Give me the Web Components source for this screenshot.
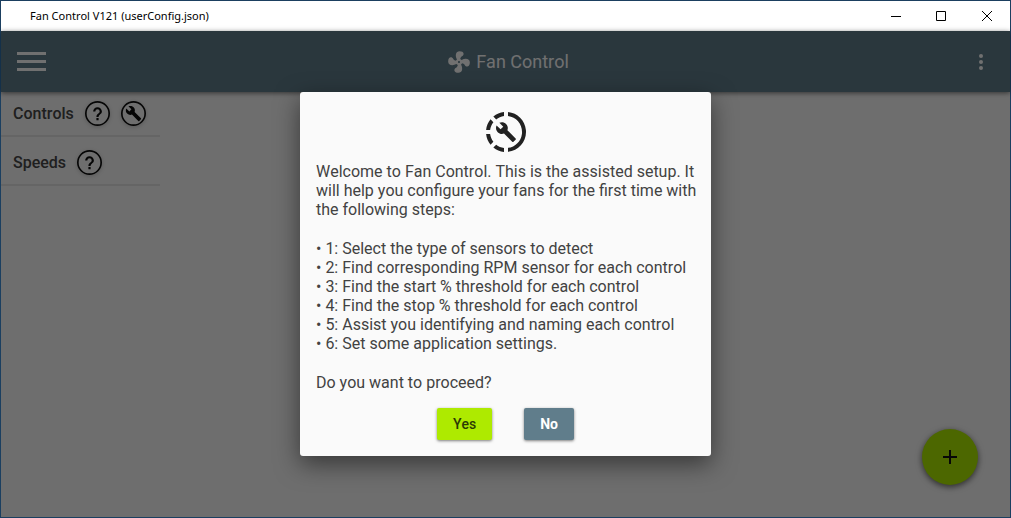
<!DOCTYPE html>
<html lang="en">
<head>
<meta charset="utf-8">
<title>Fan Control</title>
<style>
html, body { height: 100%; margin: 0; }
body { font-family: Roboto, "Liberation Sans", sans-serif; font-kerning: none; }
</style>
</head>
<body>
<fc-window>
  <fc-titlebar slot="title">Fan Control V121 (userConfig.json)</fc-titlebar>
  <fc-appbar slot="bar">Fan Control</fc-appbar>
  <fc-section>Controls
    <fc-round-button slot="actions" icon="help" label="Controls help"></fc-round-button>
    <fc-round-button slot="actions" icon="wrench" label="Assisted setup"></fc-round-button>
  </fc-section>
  <fc-section class="second">Speeds
    <fc-round-button slot="actions" icon="help" label="Speeds help"></fc-round-button>
  </fc-section>
  <fc-fab slot="fab"></fc-fab>
  <fc-dialog slot="dialog">
    <fc-button slot="actions" kind="accent">Yes</fc-button>
    <fc-button slot="actions" kind="primary">No</fc-button>
  </fc-dialog>
</fc-window>
<script>
function define(name, html) {
  const template = document.createElement('template');
  template.innerHTML = html;
  customElements.define(name, class extends HTMLElement {
    constructor() {
      super();
      this.attachShadow({ mode: 'open' }).appendChild(template.content.cloneNode(true));
    }
  });
}

define('fc-window', `
<style>
:host { display: flex; flex-direction: column; box-sizing: border-box; min-height: 100%; border: 1px solid #1b3f60; background: #fafafa; }
.client { flex: 1; position: relative; display: flex; flex-direction: column; }
main { flex: 1; }
.fab { position: absolute; right: 32px; bottom: 32px; }
.scrim { position: absolute; inset: 0; display: grid; place-items: center; background: rgba(0,0,0,.56); }
</style>
<slot name="title"></slot>
<div class="client">
  <slot name="bar"></slot>
  <main><slot></slot></main>
  <div class="fab"><slot name="fab"></slot></div>
  <div class="scrim"><slot name="dialog"></slot></div>
</div>`);

define('fc-titlebar', `
<style>
:host { display: flex; align-items: center; height: 30px; background: #fff; color: #000; font-family: "Noto Sans", sans-serif; font-size: 11px; line-height: 16px; }
.name { flex: 1; padding-left: 29px; }
button { width: 46px; height: 30px; padding: 0; border: 0; background: none; display: grid; place-items: center; }
svg { display: block; width: 12px; height: 12px; fill: none; stroke: #000; }
</style>
<span class="name"><slot></slot></span>
<button aria-label="Minimize"><svg viewBox="0 0 12 12"><path d="M2 6.5H12"/></svg></button>
<button aria-label="Maximize"><svg viewBox="0 0 12 12"><path d="M1.5 1.5h9v9h-9z"/></svg></button>
<button aria-label="Close"><svg viewBox="0 0 12 12"><path d="M1 1L11 11M11 1L1 11"/></svg></button>`);

define('fc-appbar', `
<style>
:host { display: grid; grid-template-columns: 1fr auto 1fr; align-items: center; height: 61px; background: #607d8b; color: #fff; position: relative; box-shadow: 0 1px 5px rgba(0,0,0,.55); }
h1 { margin: 0; padding-left: 4px; display: flex; align-items: center; gap: 4px; font-size: 18px; line-height: 24px; font-weight: 400; }
button { padding: 0; border: 0; background: none; color: inherit; }
.menu { justify-self: start; margin-left: 16px; }
.more { justify-self: end; margin-right: 23px; }
svg { display: block; fill: currentColor; }
</style>
<button class="menu" aria-label="Menu"><svg width="29" height="19" viewBox="0 0 29 19"><path d="M0 0h29v3H0zM0 8h29v3H0zM0 16h29v3H0z"/></svg></button>
<h1><svg width="26" height="26" viewBox="0 0 24 24"><path d="M12,11A1,1 0 0,0 11,12A1,1 0 0,0 12,13A1,1 0 0,0 13,12A1,1 0 0,0 12,11M12.5,2C17,2 17.11,5.57 14.75,6.75C13.76,7.24 13.32,8.29 13.13,9.22C13.61,9.42 14.03,9.73 14.35,10.13C18.05,8.13 22.03,8.92 22.03,12.5C22.03,17 18.46,17.1 17.28,14.73C16.78,13.74 15.72,13.3 14.79,13.11C14.59,13.59 14.28,14 13.88,14.34C15.87,18.03 15.08,22 11.5,22C7,22 6.91,18.42 9.27,17.24C10.25,16.75 10.69,15.71 10.89,14.79C10.4,14.59 9.97,14.27 9.65,13.87C5.96,15.85 2,15.07 2,11.5C2,7 5.56,6.89 6.74,9.26C7.24,10.25 8.29,10.68 9.22,10.87C9.41,10.39 9.73,9.97 10.14,9.65C8.15,5.96 8.94,2 12.5,2Z"/></svg><span><slot></slot></span></h1>
<button class="more" aria-label="More"><svg width="12" height="18" viewBox="0 0 12 18"><circle cx="6" cy="3" r="2"/><circle cx="6" cy="9" r="2"/><circle cx="6" cy="15" r="2"/></svg></button>`);

define('fc-section', `
<style>
:host { display: flex; align-items: center; gap: 11px; width: 147px; padding: 9px 0 9px 12px; border-bottom: 2px solid #e6e6e6; }
:host(.second) { padding-top: 13px; }
h2 { margin: 0; font-size: 16px; line-height: 24px; font-weight: 500; color: #484848; }
</style>
<h2><slot></slot></h2><slot name="actions"></slot>`);

const ICONS = {
  help: '<path fill="currentColor" transform="translate(-.6 -.4) scale(1.05)" d="M11,18H13V16H11V18M12,6A4,4 0 0,0 8,10H10A2,2 0 0,1 12,8A2,2 0 0,1 14,10C14,12 11,11.75 11,15H13C13,12.75 16,12.5 16,10A4,4 0 0,0 12,6Z"/>',
  wrench: '<path fill="currentColor" transform="translate(4 4) scale(.667)" d="M22.7,19L13.6,9.9C14.5,7.6 14,4.9 12.1,3C10.1,1 7.1,0.6 4.7,1.7L9,6L6,9L1.6,4.7C0.4,7.1 0.9,10.1 2.9,12.1C4.8,14 7.5,14.5 9.8,13.6L18.9,22.7C19.3,23.1 19.9,23.1 20.3,22.7L22.6,20.4C23.1,20 23.1,19.3 22.7,19Z"/>'
};
customElements.define('fc-round-button', class extends HTMLElement {
  constructor() {
    super();
    this.attachShadow({ mode: 'open' });
  }
  connectedCallback() {
    this.shadowRoot.innerHTML = `
<style>
:host { display: block; }
button { display: block; width: 25px; height: 25px; padding: 0; border: 0; border-radius: 50%; background: none; color: #0c0c0c; box-shadow: 0 1px 4px rgba(0,0,0,.2); }
svg { display: block; width: 25px; height: 25px; }
</style>
<button aria-label="${this.getAttribute('label')}"><svg viewBox="0 0 24 24"><circle cx="12" cy="12" r="11.2" fill="none" stroke="currentColor" stroke-width="1.6"/>${ICONS[this.getAttribute('icon')]}</svg></button>`;
  }
});

define('fc-fab', `
<style>
:host { display: block; }
button { width: 56px; height: 56px; padding: 0; border: 0; border-radius: 50%; background: #aeea00; display: grid; place-items: center; box-shadow: 0 2px 6px rgba(0,0,0,.6); }
svg { display: block; }
</style>
<button aria-label="Add"><svg width="14" height="14" viewBox="0 0 14 14"><path d="M6 0h2v6h6v2H8v6H6V8H0V6h6z" fill="#111"/></svg></button>`);

define('fc-button', `
<style>
:host { display: block; }
button { height: 32px; padding: 0 16px; border: 0; border-radius: 2px; font: 500 14px/20px Roboto, sans-serif; font-kerning: none; background: #aeea00; color: #2c3a05; box-shadow: 0 1px 3px rgba(0,0,0,.5); }
:host([kind="primary"]) button { background: #607d8b; color: #fff; font-weight: 700; }
</style>
<button><slot></slot></button>`);

define('fc-dialog', `
<style>
:host { display: block; }
section { box-sizing: border-box; max-width: 411px; padding: 16px; border-radius: 3px; background: #fafafa; color: #424242; font-size: 16px; line-height: 19px; box-shadow: 0 8px 24px rgba(0,0,0,.5); }
svg { display: block; margin: 0 auto 6px; fill: #212121; }
p { margin: 0 -8px 0 0; }
ul { margin: 20px 0; padding: 0; list-style: none; }
li::before { content: "• "; }
.actions { display: flex; justify-content: center; gap: 32px; margin-top: 16px; }
</style>
<section role="dialog" aria-label="Assisted setup">
<svg width="48" height="48" viewBox="0 0 24 24"><path d="M13,2.03V2.05L13,4.05C17.39,4.59 20.5,8.58 19.96,12.97C19.5,16.61 16.64,19.5 13,19.93V21.93C18.5,21.38 22.5,16.5 21.95,11C21.5,6.25 17.73,2.5 13,2.03M11,2.06C9.05,2.25 7.19,3 5.67,4.26L7.1,5.74C8.22,4.84 9.57,4.26 11,4.06V2.06M4.26,5.67C3,7.19 2.25,9.04 2.05,11H4.05C4.24,9.58 4.8,8.23 5.69,7.1L4.26,5.67M2.06,13C2.26,14.96 3.03,16.81 4.27,18.33L5.69,16.9C4.81,15.77 4.24,14.42 4.06,13H2.06M7.1,18.37L5.67,19.74C7.18,21 9.04,21.79 11,22V20C9.58,19.82 8.23,19.25 7.1,18.37M16.82,15.19L12.71,11.08C13.12,10.04 12.89,8.82 12.03,7.97C11.13,7.06 9.78,6.88 8.69,7.38L10.63,9.32L9.28,10.68L7.29,8.73C6.75,9.82 7,11.17 7.88,12.08C8.74,12.94 9.96,13.16 11,12.76L15.11,16.86C15.29,17.05 15.56,17.05 15.74,16.86L16.78,15.83C17,15.65 17,15.33 16.82,15.19Z"/></svg>
<p>Welcome to Fan Control. This is the assisted setup. It will help you configure your fans for the first time with the following steps:</p>
<ul>
<li>1: Select the type of sensors to detect</li>
<li>2: Find corresponding RPM sensor for each control</li>
<li>3: Find the start % threshold for each control</li>
<li>4: Find the stop % threshold for each control</li>
<li>5: Assist you identifying and naming each control</li>
<li>6: Set some application settings.</li>
</ul>
<p>Do you want to proceed?</p>
<div class="actions"><slot name="actions"></slot></div>
</section>`);
</script>
</body>
</html>
